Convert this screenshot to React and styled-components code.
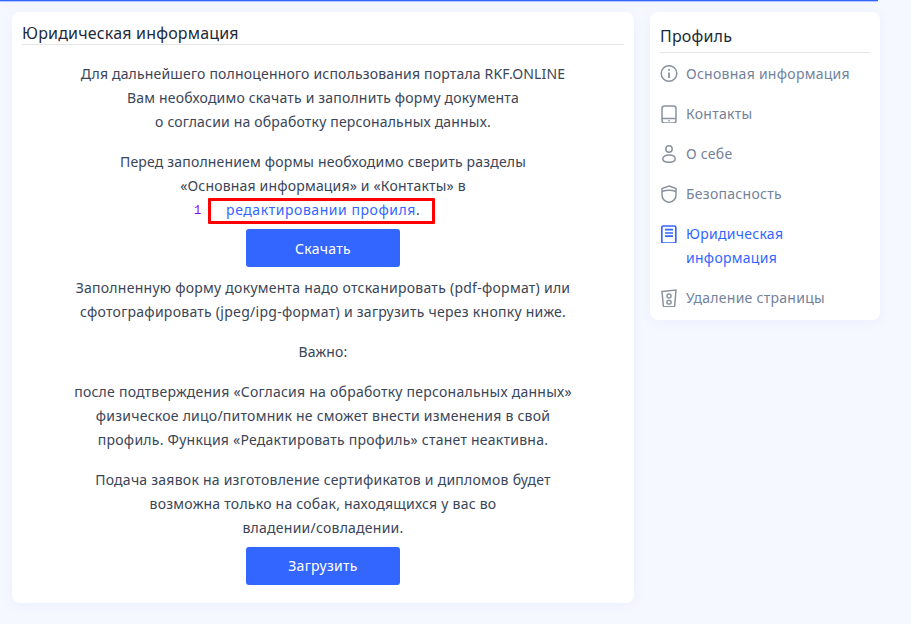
import React from "react";
import styled, { createGlobalStyle } from "styled-components";

const Global = createGlobalStyle`
  html, body { margin: 0; padding: 0; background: #f5f8ff; }
  body { font-family: "Noto Sans", "Open Sans", sans-serif; overflow: hidden; }
`;
const Page = styled.div`
  width: 911px; height: 624px; overflow: hidden; position: relative;
  background: #f6f8ff;
`;
const TopBar = styled.div`
  height: 1px; width: 878px; background: #3366ff;
  box-shadow: 0 1px 0 rgba(51,102,255,.35), 0 3px 8px rgba(51,102,255,.1);
`;
const Layout = styled.div`
  display: flex; align-items: flex-start; gap: 16px; padding: 11px 0 0 12px;
`;
const Card = styled.div`
  background: #fff; border-radius: 8px;
  box-shadow: 0 2px 12px rgba(51,102,255,.06);
`;
const MainCard = styled(Card)`
  width: 622px; height: 591px; box-sizing: border-box; padding: 10px 10px 0;
`;
const MainTitle = styled.h2`
  margin: 0; font-size: 16px; font-weight: 400; line-height: 22px; color: #1e2a3a; letter-spacing: .18px;
  border-bottom: 1px solid #e5e5e5;
`;
const Body = styled.div`
  padding: 17px 0 0;
  display: flex; flex-direction: column; align-items: center;
`;
const Para = styled.p`
  margin: 0 0 16px; width: 560px; text-align: center; font-size: 14px; line-height: 24px; color: #3a4557;
  letter-spacing: ${p => p.$spacing || ".18px"};
`;
const LeadPara = styled(Para)`margin-bottom: 7px;`;
const AfterButton = styled(Para)`margin-top: 9px;`;
const LastPara = styled(Para)`margin-bottom: 7px;`;
const LinkRow = styled.span`
  position: relative; display: inline-block;
`;
const Badge = styled.span`
  position: absolute; left: -32px; top: 1px; font-family: "Liberation Mono", monospace; font-size: 12px; color: #8a00ff; letter-spacing: 0;
`;
const Highlight = styled.span`
  position: absolute; left: -18px; right: -15px; top: 0; height: 26px;
  border: 3px solid #f00; box-sizing: border-box; border-radius: 1px;
`;
const Link = styled.a`color: #3366ff; letter-spacing: .55px;`;
const Button = styled.button`
  width: 154px; height: 38px; border: 0; border-radius: 3px; background: #3366ff; color: #fff;
  padding: 0 0 ${p => (p.$raised ? "2px" : "0")};
  font: 400 14px "Noto Sans", sans-serif; letter-spacing: .3px; display: block; flex: none;
`;
const Side = styled(Card)`
  width: 230px; height: 308px; box-sizing: border-box; padding: 12px 10px 0;
`;
const SideTitle = styled.h3`
  margin: 0 0 1px; font-size: 16px; font-weight: 400; line-height: 24px; padding-bottom: 4px; color: #1e2a3a; letter-spacing: .18px;
  border-bottom: 1px solid #e5e5e5;
`;
const Item = styled.div`
  display: flex; align-items: flex-start; gap: 8px; padding: 8px 0; font-size: 14px; line-height: 24px; letter-spacing: .27px;
  color: ${p => (p.$active ? "#3366ff" : "#72829c")};
`;
const IconWrap = styled.span`
  flex: none; width: 18px; height: 24px; display: flex; align-items: center; justify-content: center;
  color: ${p => (p.$active ? "#3366ff" : "#8a939e")};
`;
const Ic = ({ children }) => (
  <svg width="18" height="18" viewBox="0 0 18 18" fill="none" stroke="currentColor" strokeWidth="1.5">{children}</svg>
);

const items = [
  ["Основная информация", <Ic><circle cx="9" cy="8.500" r="7.800"/><path d="M9 7.500v5.500M9 4v1.800" strokeWidth="1.800"/></Ic>],
  ["Контакты", <Ic><rect x="2" y="1" width="14" height="17" rx="2.500"/><path d="M2 13.500h14M8.300 15.800h1.400"/></Ic>],
  ["О себе", <Ic><circle cx="9" cy="4" r="3.200"/><path d="M9 10c-3.600 0-6.200 1.500-6.200 3.800S5.400 17.300 9 17.300s6.200-1.200 6.200-3.500S12.600 10 9 10z"/></Ic>],
  ["Безопасность", <Ic><path d="M9 1l7 2.500V10c0 4-3 6.500-7 7.500-4-1-7-3.500-7-7.500V3.500zM2 6.500c4.500-1.500 9.500-1.500 14 0"/></Ic>],
  ["Юридическая информация", <Ic><rect x="1.800" y="1" width="14" height="17" rx="1.500" strokeWidth="1.700"/><path d="M5 4.700h8M5 8h8M5 11.200h8" strokeWidth="1.700"/></Ic>, true],
  ["Удаление страницы", <Ic><path d="M2 2.500L16 1l-1.300 15.800a1 1 0 0 1-1 .9H4.300a1 1 0 0 1-1-.9z"/><circle cx="9" cy="7" r="2"/><rect x="7" y="11.500" width="4" height="3.500" rx="1"/></Ic>],
];

export default function App() {
  return (
    <Page>
      <Global />
      <TopBar />
      <Layout>
        <MainCard>
          <MainTitle>Юридическая информация</MainTitle>
          <Body>
            <Para>Для дальнейшего полноценного использования портала RKF.ONLINE<br/>Вам необходимо скачать и заполнить форму документа<br/>о согласии на обработку персональных данных.</Para>
            <LeadPara>Перед заполнением формы необходимо сверить разделы<br/>«Основная информация» и «Контакты» в<br/>
              <LinkRow><Badge>1</Badge><Highlight/><Link>редактировании профиля</Link>.</LinkRow></LeadPara>
            <Button>Скачать</Button>
            <AfterButton $spacing=".26px">Заполненную форму документа надо отсканировать (pdf-формат) или<br/>сфотографировать (jpeg/ipg-формат) и загрузить через кнопку ниже.</AfterButton>
            <Para>Важно:</Para>
            <Para $spacing=".24px">после подтверждения «Согласия на обработку персональных данных»<br/>физическое лицо/питомник не сможет внести изменения в свой<br/>профиль. Функция «Редактировать профиль» станет неактивна.</Para>
            <LastPara $spacing=".24px">Подача заявок на изготовление сертификатов и дипломов будет<br/>возможна только на собак, находящихся у вас во<br/>владении/совладении.</LastPara>
            <Button $raised>Загрузить</Button>
          </Body>
        </MainCard>
        <Side>
          <SideTitle>Профиль</SideTitle>
          {items.map(([t, icon, a]) => (
            <Item key={t} $active={a}><IconWrap $active={a}>{icon}</IconWrap><span>{t}</span></Item>
          ))}
        </Side>
      </Layout>
    </Page>
  );
}
